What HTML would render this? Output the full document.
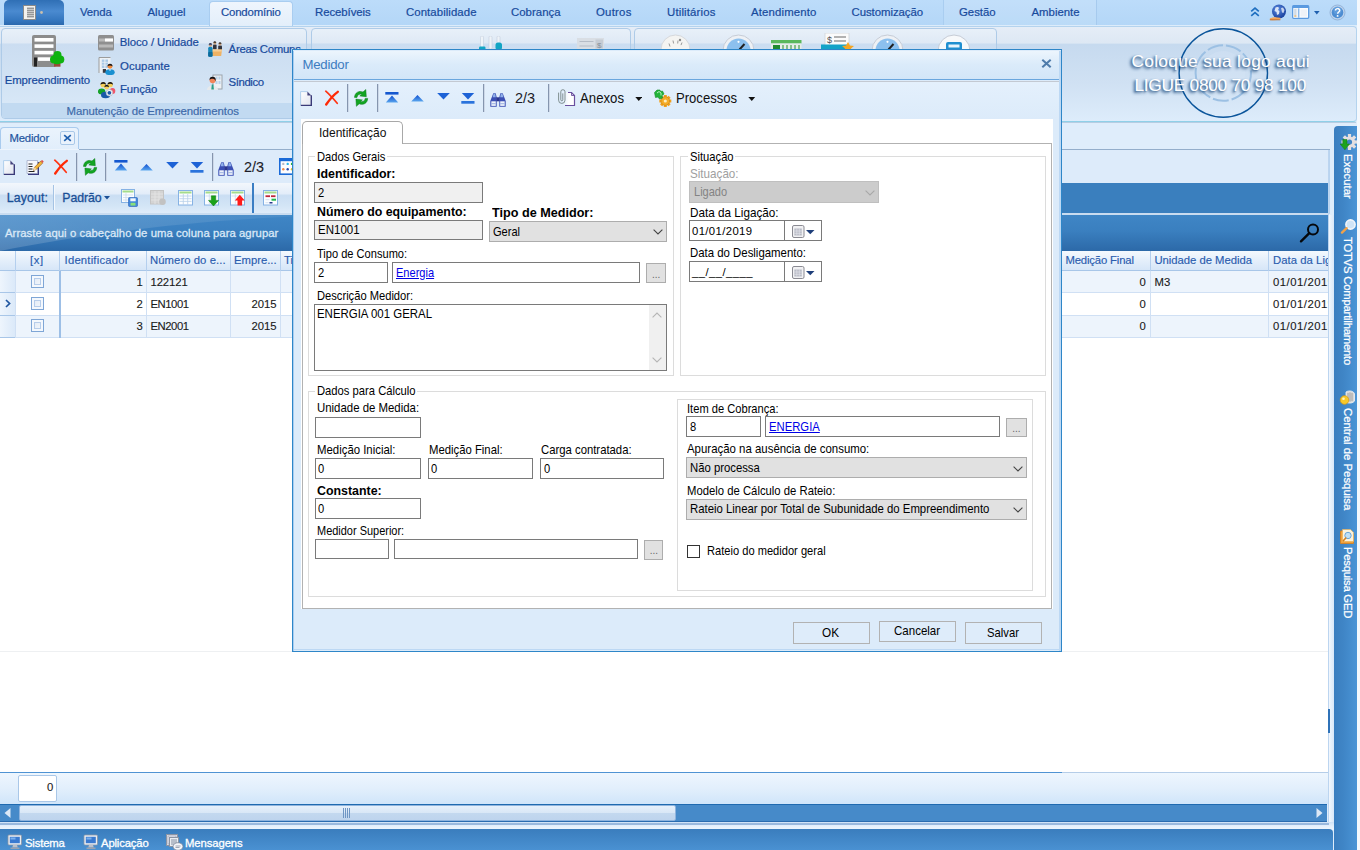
<!DOCTYPE html><html><head><meta charset="utf-8"><title>Medidor</title><style>
*{box-sizing:border-box;margin:0;padding:0}
html,body{width:1360px;height:850px;overflow:hidden;background:#fff;font-family:"Liberation Sans",sans-serif;}
#r{position:absolute;left:0;top:0;width:1360px;height:850px;overflow:hidden;background:#fff}
#r div,#r span,#r svg{position:absolute}
.t{white-space:nowrap;}
.in{background:#fff;border:1px solid #7a7a7a}
.ro{background:#f0f0f0;border:1px solid #7a7a7a}
.cb{background:#e1e1e1;border:1px solid #adadad}
.bt{background:#e1e1e1;border:1px solid #adadad}
.bt2{background:#deecfa;border:1.500px solid #b2b2b2}
.gb{border:1px solid #dcdcdc}
</style></head><body><div id="r"><div style="left:0px;top:0px;width:1360px;height:27px;background:linear-gradient(#bcdcfa,#b3d6f7)"></div>
<div style="left:0px;top:25px;width:1360px;height:2px;background:#dcecfb"></div>
<div style="left:4px;top:0px;width:60px;height:25px;border-radius:5px 5px 0 0;background:linear-gradient(#2f6fb5 0%,#4a8ad0 45%,#3577bf 80%,#2a68ae 100%)"></div>
<svg style="left:23px;top:5px" width="24" height="16" viewBox="0 0 24 16"><rect x="0.5" y="0.5" width="12" height="14" fill="#f4f2ee" stroke="#8a8a8a"/><rect x="4" y="2" width="7" height="11" fill="#c9c9c9"/><path d="M4 3.5h7M4 5.5h7M4 7.5h7M4 9.5h7M4 11.5h7" stroke="#8a8a8a" stroke-width="0.8"/><circle cx="18.5" cy="7.5" r="1.4" fill="#c8bfae"/></svg>
<div style="left:209px;top:1px;width:84px;height:27px;border-radius:4px 4px 0 0;background:linear-gradient(#eef5fd,#e2eefa);border:1px solid #a9cdf0;border-bottom:none"></div>
<div style="left:943px;top:0px;width:153px;height:25px;background:rgba(255,255,255,.1)"></div>
<div style="left:943px;top:0px;width:1px;height:25px;background:#a9cdf0"></div>
<div style="left:1096px;top:0px;width:1px;height:25px;background:#a6caee"></div>
<span class="t" style="left:80px;top:2px;font-size:11.4px;line-height:20px;color:#174a9c;letter-spacing:-0.143px;-webkit-text-stroke-width:0.2px;">Venda</span>
<span class="t" style="left:147.5px;top:2px;font-size:11.4px;line-height:20px;color:#174a9c;letter-spacing:0.014px;-webkit-text-stroke-width:0.2px;">Aluguel</span>
<span class="t" style="left:221px;top:2px;font-size:11.4px;line-height:20px;color:#174a9c;letter-spacing:-0.182px;-webkit-text-stroke-width:0.2px;">Condomínio</span>
<span class="t" style="left:315px;top:2px;font-size:11.4px;line-height:20px;color:#174a9c;letter-spacing:-0.076px;-webkit-text-stroke-width:0.2px;">Recebíveis</span>
<span class="t" style="left:406px;top:2px;font-size:11.4px;line-height:20px;color:#174a9c;letter-spacing:0.071px;-webkit-text-stroke-width:0.2px;">Contabilidade</span>
<span class="t" style="left:511px;top:2px;font-size:11.4px;line-height:20px;color:#174a9c;letter-spacing:0.026px;-webkit-text-stroke-width:0.2px;">Cobrança</span>
<span class="t" style="left:596px;top:2px;font-size:11.4px;line-height:20px;color:#174a9c;letter-spacing:0.235px;-webkit-text-stroke-width:0.2px;">Outros</span>
<span class="t" style="left:667px;top:2px;font-size:11.4px;line-height:20px;color:#174a9c;letter-spacing:0.160px;-webkit-text-stroke-width:0.2px;">Utilitários</span>
<span class="t" style="left:751px;top:2px;font-size:11.4px;line-height:20px;color:#174a9c;letter-spacing:0.148px;-webkit-text-stroke-width:0.2px;">Atendimento</span>
<span class="t" style="left:851.5px;top:2px;font-size:11.4px;line-height:20px;color:#174a9c;letter-spacing:-0.048px;-webkit-text-stroke-width:0.2px;">Customização</span>
<span class="t" style="left:959px;top:2px;font-size:11.4px;line-height:20px;color:#174a9c;letter-spacing:-0.022px;-webkit-text-stroke-width:0.2px;">Gestão</span>
<span class="t" style="left:1031.5px;top:2px;font-size:11.4px;line-height:20px;color:#174a9c;-webkit-text-stroke-width:0.2px;">Ambiente</span>
<div style="left:0px;top:27px;width:1360px;height:96px;background:#dfedfb"></div>
<div style="left:-3px;top:26px;width:1359.5px;height:96px;border-radius:4px;border:1px solid #b4d3ee;border-bottom:1.500px solid #8fd0e8;background:linear-gradient(#e5edf7 0%,#dde8f4 17%,#c6daef 18.5%,#d0e1f3 60%,#ddecfb 100%)"></div>
<div style="left:0px;top:122px;width:1356px;height:1px;background:#b7cde2"></div>
<div style="left:1px;top:27.5px;width:306px;height:91px;border-radius:4px;border:1px solid #aecbe8;background:linear-gradient(#e8f0f9 0%,#dfe9f5 15.500%,#cbddf1 17%,#d2e3f4 60%,#dbeaf9 100%);overflow:hidden"></div>
<div style="left:2px;top:102.5px;width:304px;height:15.5px;background:#c2daf1;border-radius:0 0 3px 3px"></div>
<div style="left:311px;top:27.5px;width:320px;height:91px;border-radius:4px;border:1px solid #aecbe8;background:linear-gradient(#e8f0f9 0%,#dfe9f5 15.500%,#cbddf1 17%,#d2e3f4 60%,#dbeaf9 100%);overflow:hidden"></div>
<div style="left:312px;top:102.5px;width:318px;height:15.5px;background:#c2daf1;border-radius:0 0 3px 3px"></div>
<div style="left:634px;top:27.5px;width:363px;height:91px;border-radius:4px;border:1px solid #aecbe8;background:linear-gradient(#e8f0f9 0%,#dfe9f5 15.500%,#cbddf1 17%,#d2e3f4 60%,#dbeaf9 100%);overflow:hidden"></div>
<div style="left:635px;top:102.5px;width:361px;height:15.5px;background:#c2daf1;border-radius:0 0 3px 3px"></div>
<svg style="left:32px;top:35px" width="34" height="33" viewBox="0 0 34 33"><rect x="0" y="0" width="24" height="32" rx="2" fill="#8c8c8c"/><rect x="2.5" y="3" width="19" height="3.6" fill="#fff"/><rect x="2.5" y="9.3" width="19" height="3.6" fill="#fff"/><rect x="2.5" y="15.8" width="19" height="3.6" fill="#fff"/><rect x="6" y="22.3" width="15" height="3.6" fill="#fff"/><rect x="2" y="22.5" width="3" height="9" fill="#222"/><rect x="22" y="27" width="6.5" height="4.7" fill="#9b4a3a"/><circle cx="25" cy="24" r="5.2" fill="#0fb30f"/><circle cx="22" cy="24.5" r="4" fill="#0fb30f"/><circle cx="28.3" cy="24.5" r="4" fill="#0fb30f"/><circle cx="25.5" cy="20" r="4" fill="#0fb30f"/></svg>
<span class="t" style="left:4.7px;top:70px;font-size:11.4px;line-height:20px;color:#174a9c;letter-spacing:-0.104px;-webkit-text-stroke-width:0.2px;">Empreendimento</span>
<svg style="left:98px;top:35px" width="17" height="16" viewBox="0 0 17 16"><rect x="0" y="0" width="16" height="15.5" rx="1.5" fill="#8f8f8f"/><rect x="1" y="3.5" width="14" height="3" fill="#b9b9b9"/><rect x="7" y="3.5" width="8" height="3" fill="#fff"/><rect x="1" y="9.5" width="14" height="3" fill="#b9b9b9"/></svg>
<span class="t" style="left:119.8px;top:32px;font-size:11.4px;line-height:20px;color:#174a9c;letter-spacing:-0.095px;-webkit-text-stroke-width:0.2px;">Bloco / Unidade</span>
<svg style="left:98px;top:57px" width="18" height="18" viewBox="0 0 18 18"><rect x="1" y=".5" width="11.500" height="15.500" fill="#eef2f6"/><path d="M1 16V.5h11.500" fill="none" stroke="#9c9c9c" stroke-width="1"/><rect x="3.800" y="2.500" width="2.600" height="8.500" fill="#a9c9e8"/><rect x="7.400" y="2.500" width="2.600" height="8.500" fill="#a9c9e8"/><path d="M3.800 5.300h6.200M3.800 8.100h6.200" stroke="#eef2f6" stroke-width=".7"/><rect x="4.800" y="12" width="3.200" height="3.800" fill="#3a3a42"/><ellipse cx="12" cy="15.200" rx="4.700" ry="2.900" fill="#1a90d0"/><path d="M10.800 12.400l1.200 1.600 1.200-1.600z" fill="#f2f6fa"/><circle cx="12" cy="9.300" r="2.400" fill="#f08a3c"/><path d="M9.500 9.300a2.500 2.600 0 0 1 5 0c-1.400-1.200-3.600-1.200-5 0z" fill="#16161a"/></svg>
<span class="t" style="left:120px;top:56px;font-size:11.4px;line-height:20px;color:#174a9c;letter-spacing:0.074px;-webkit-text-stroke-width:0.2px;">Ocupante</span>
<svg style="left:98px;top:80px" width="18" height="19" viewBox="0 0 18 19"><ellipse cx="3.600" cy="11.500" rx="3.700" ry="3.100" fill="#16a22a"/><ellipse cx="14.500" cy="11" rx="2.800" ry="3" fill="#f0566a"/><circle cx="5.200" cy="4.700" r="2.600" fill="#f5cf58"/><path d="M2.500 4.800a2.700 2.800 0 0 1 5.400 0c-1.500-1.300-3.900-1.300-5.400 0z" fill="#16161a"/><circle cx="12.200" cy="4.700" r="2.600" fill="#f5cf58"/><path d="M9.500 4.800a2.700 2.800 0 0 1 5.400 0c-1.500-1.300-3.900-1.300-5.400 0z" fill="#16161a"/><ellipse cx="7.600" cy="15" rx="4.600" ry="3.300" fill="#1a5aa8"/><circle cx="8.700" cy="7.200" r="2.300" fill="#f5cf58"/><path d="M6.300 7.300a2.400 2.500 0 0 1 4.800 0c-1.300-1.200-3.500-1.200-4.800 0z" fill="#16161a"/><circle cx="11.400" cy="12.800" r="3.300" fill="#f4f6f8" stroke="#a8b0bc" stroke-width=".6"/><circle cx="11.400" cy="12.800" r="1.900" fill="#1a5aa8"/></svg>
<span class="t" style="left:120px;top:79px;font-size:11.4px;line-height:20px;color:#174a9c;letter-spacing:-0.150px;-webkit-text-stroke-width:0.2px;">Função</span>
<svg style="left:206px;top:41px" width="18" height="17" viewBox="0 0 18 17"><rect x="7" y="3.500" width="3.600" height="5" rx="1" fill="#33343c"/><circle cx="8.800" cy="2" r="1.500" fill="#c9a07a"/><path d="M7.300 1.800a1.500 1.500 0 0 1 3 0z" fill="#222"/><rect x="12.200" y="4.500" width="3.800" height="5" rx="1" fill="#33343c"/><circle cx="14" cy="3" r="1.500" fill="#c9a07a"/><path d="M12.500 2.800a1.500 1.500 0 0 1 3 0z" fill="#222"/><path d="M5.500 8.500h10.500l-.8 6.500H6z" fill="#eeb265"/><path d="M5.500 8.500h10.500l-.3 2H5.700z" fill="#f6cf98"/><rect x="2.200" y="5.800" width="4.300" height="10" rx="1.500" fill="#1585b8"/><rect x="2.200" y="11" width="4.300" height="4.800" rx="1" fill="#0c6a9c"/><circle cx="4.400" cy="4" r="1.700" fill="#c9a07a"/><path d="M2.700 3.800a1.700 1.700 0 0 1 3.400 0z" fill="#2a3a6a"/></svg>
<span class="t" style="left:228.6px;top:39px;font-size:11.4px;line-height:20px;color:#174a9c;letter-spacing:-0.279px;-webkit-text-stroke-width:0.2px;">Áreas Comuns</span>
<svg style="left:207px;top:74px" width="17" height="17" viewBox="0 0 17 17"><rect x="6" y="1" width="9" height="14" fill="#eef1f4" stroke="#9aa3ad"/><path d="M8.5 2.5h2v3h-2zM11.5 2.5h2v3h-2zM8.5 7h2v3h-2zM11.5 7h2v3h-2z" fill="#b9d3ea"/><circle cx="5.600" cy="6.300" r="3" fill="#f2865a"/><path d="M2.500 6a3.100 3.200 0 0 1 6.200 0l-.3 1.500c-.2-2-1-2.800-2.400-2.800-1.600 0-3 .3-3.500 1.300z" fill="#16161a"/><path d="M0 16c0-6 11-6 11 0z" fill="#e6e9ec"/><path d="M4.8 10.5h1.6l.5 5h-2.6z" fill="#2aa08a"/></svg>
<span class="t" style="left:228.6px;top:72px;font-size:11.4px;line-height:20px;color:#174a9c;letter-spacing:-0.429px;-webkit-text-stroke-width:0.2px;">Síndico</span>
<span class="t" style="left:66.5px;top:101px;font-size:11.4px;line-height:20px;color:#3e6aaa;letter-spacing:-0.063px;-webkit-text-stroke-width:0.2px;">Manutenção de Empreendimentos</span>
<div style="left:0px;top:123px;width:1360px;height:727px;background:#dfedfb"></div>
<div style="left:1357px;top:0px;width:3px;height:850px;background:#f3f8fd"></div>
<div style="left:0px;top:127px;width:79px;height:23px;border-radius:4px 4px 0 0;border:1px solid #a9cbee;border-bottom:none;background:linear-gradient(#eaf3fc,#e1eefb)"></div>
<div style="left:78.5px;top:148.5px;width:1251.5px;height:1.5px;background:#94aecb"></div>
<div style="left:0px;top:148.5px;width:78.5px;height:1.5px;background:#edf4fc"></div>
<span class="t" style="left:9.4px;top:128px;font-size:11.3px;line-height:20px;color:#1f55a0;letter-spacing:-0.161px;-webkit-text-stroke-width:0.2px;">Medidor</span>
<div style="left:60px;top:131px;width:15px;height:14px;border:1px solid #a9c8e8;border-radius:2px;background:#e9f2fc"></div>
<svg style="left:63px;top:134px" width="9" height="8" viewBox="0 0 9 8"><path d="M1.2 1.2L7.8 6.8M7.8 1.2L1.2 6.8" stroke="#1f5fae" stroke-width="1.7"/></svg>
<div style="left:0px;top:150px;width:1329px;height:33px;background:#ddebfa"></div>
<div style="left:1329px;top:150px;width:1px;height:64px;background:#b9d4f0"></div>
<div style="left:0px;top:183px;width:1329px;height:31px;background:#3a7fbe"></div>
<div style="left:0px;top:183px;width:700px;height:30px;background:linear-gradient(#f3f7fc 0%,#e3edf9 35%,#cadef3 42%,#d3e5f6 75%,#dfecfa 100%)"></div>
<div style="left:0px;top:212.5px;width:1329px;height:2.5px;background:#c9dcf0"></div>
<svg style="left:3px;top:160px" width="13" height="16" viewBox="0 0 13 16"><defs><linearGradient id="pg" x1="0" y1="0" x2="1" y2="1"><stop offset="0" stop-color="#ffffff"/><stop offset="1" stop-color="#dfe3ee"/></linearGradient></defs><path d="M.6 .6H7.400L11.300 4.500V14.400H.6z" fill="url(#pg)"/><path d="M.6 14.400V.6H7.400" fill="none" stroke="#a9cbea" stroke-width=".9"/><path d="M7.400 .6L11.300 4.500H7.400z" fill="#45457f"/><path d="M11.300 4.300V14.400H.8" fill="none" stroke="#3a3a78" stroke-width="1.400"/></svg>
<svg style="left:26px;top:159px" width="18" height="17" viewBox="0 0 18 17"><path d="M2 3h11v13H2z" fill="#3b3b80"/><path d="M1 1.5h10.5v13H1z" fill="#f7f8fc" stroke="#9aa4c0" stroke-width=".7"/><path d="M2.5 5h4M2.5 7.5h4M2.5 10h4M2.5 12.5h6" stroke="#222" stroke-width="1.1"/><path d="M7.5 11.5l1-3.2 6.2-6.2 2 2-6.2 6.2z" fill="#f2b43a" stroke="#8a5a1a" stroke-width=".6"/><path d="M14.7 2.1l1.4-1.2 1.6 1.6-1 1.6z" fill="#e0524a"/><path d="M7.5 11.5l1-3.2 2 2z" fill="#f6dcae"/></svg>
<svg style="left:52.7px;top:158.8px" width="15" height="16" viewBox="0 0 15 16"><path d="M1.800 1.200C5.500 4.500 9.500 9 13.200 13.300" stroke="#ff3312" stroke-width="1.700" fill="none" stroke-linecap="round"/><path d="M13.800 1.800C9.500 5 5.500 9.500 2.200 14.500" stroke="#ff2a06" stroke-width="2.300" fill="none" stroke-linecap="round"/></svg>
<div style="left:76px;top:153px;width:1px;height:27.5px;background:#8595ae"></div>
<div style="left:77px;top:153px;width:1px;height:27.5px;background:#cdd8e8"></div>
<svg style="left:82.7px;top:158px" width="15" height="18" viewBox="0 0 15 18"><g fill="#12a522" stroke="#0a7a16" stroke-width=".5"><path id="ra" d="M.5 8.400C.7 3.600 5 1.300 9 3L11.800 .5 12.300 7.700 5.800 6.900 7.700 5.200C5.700 4.600 3.300 5.900 3 8.400z"/><path d="M.5 8.400C.7 3.600 5 1.300 9 3L11.800 .5 12.300 7.700 5.800 6.900 7.700 5.200C5.700 4.600 3.300 5.900 3 8.400z" transform="rotate(180 7.100 8.900)"/></g></svg>
<div style="left:105px;top:153px;width:1px;height:27.5px;background:#8595ae"></div>
<div style="left:106px;top:153px;width:1px;height:27.5px;background:#cdd8e8"></div>
<svg style="left:113.5px;top:160.3px" width="14" height="11" viewBox="0 0 14 11"><defs><linearGradient id="bg1" x1="0" y1="0" x2="0" y2="1"><stop offset="0" stop-color="#0f4fd0"/><stop offset="1" stop-color="#5aa6ee"/></linearGradient></defs><rect x="0.3" y="0" width="13.2" height="2.6" fill="#1457cf"/><path d="M7 3.6l6.2 7H.8z" fill="url(#bg1)"/></svg>
<svg style="left:139.8px;top:163.5px" width="13" height="7" viewBox="0 0 13 7"><defs><linearGradient id="bg2" x1="0" y1="0" x2="0" y2="1"><stop offset="0" stop-color="#0f4fd0"/><stop offset="1" stop-color="#5aa6ee"/></linearGradient></defs><path d="M6.5 0l6.3 6.4H.2z" fill="url(#bg2)"/></svg>
<svg style="left:165.8px;top:162px" width="13" height="7" viewBox="0 0 13 7"><path d="M.2 0h12.6L6.5 6.6z" fill="#1d62d6"/></svg>
<svg style="left:190.1px;top:161.5px" width="14" height="11" viewBox="0 0 14 11"><path d="M.8 0h12.4L7 6.6z" fill="#1d62d6"/><rect x="0.3" y="8" width="13.2" height="2.7" fill="#2a73dc"/></svg>
<div style="left:212px;top:153px;width:1px;height:27.5px;background:#8595ae"></div>
<div style="left:213px;top:153px;width:1px;height:27.5px;background:#cdd8e8"></div>
<svg style="left:218.4px;top:161.5px" width="16" height="14" viewBox="0 0 16 14"><path d="M3.300 .2h2.400l1 4v9.500H.3V8z" fill="#3b4fb4"/><path d="M12.700 .2h-2.400l-1 4v9.500h6.400V8z" fill="#3b4fb4"/><rect x="6.300" y="4.300" width="3.400" height="4" fill="#2a3690"/><path d="M3.600 .8h1.600l.6 3.400H2.600z M10.800 .8h1.600l1 3.400h-3.200z" fill="#8fb0ea"/><rect x="1.300" y="8.300" width="4.500" height="4.600" fill="#eef2fa"/><rect x="10.200" y="8.300" width="4.500" height="4.600" fill="#eef2fa"/><rect x="1.300" y="10.200" width="4.500" height="1" fill="#9ab0e0"/><rect x="10.200" y="10.200" width="4.500" height="1" fill="#9ab0e0"/></svg>
<span class="t" style="left:243.8px;top:157px;font-size:14px;line-height:20px;color:#1c1c28;transform-origin:0 50%;transform:scaleX(1.0273);-webkit-text-stroke-width:0.1px;">2/3</span>
<svg style="left:278.5px;top:158px" width="17" height="17.500" viewBox="0 0 17 17.500"><rect x=".8" y=".8" width="15.4" height="15.4" fill="#fdfdff" stroke="#1a6ad8" stroke-width="1.6"/><rect x=".8" y=".8" width="15.4" height="2.4" fill="#1a6ad8"/><circle cx="4.3" cy="5.900" r="1.200" fill="#b9b9c8"/><circle cx="8.7" cy="5.900" r="1.200" fill="#2ab4e8"/><circle cx="13" cy="5.900" r="1.200" fill="#2ab43a"/><circle cx="4.3" cy="11.200" r="1.200" fill="#f08a4a"/><circle cx="8.7" cy="11.200" r="1.200" fill="#2a4ab0"/><circle cx="13" cy="11.200" r="1.200" fill="#e8c02a"/></svg>
<span class="t" style="left:6.8px;top:188px;font-size:12.3px;line-height:20px;color:#1a4f96;letter-spacing:0.122px;-webkit-text-stroke-width:0.3px;">Layout:</span>
<div style="left:53px;top:185px;width:1px;height:25px;background:#a5c3e4"></div>
<div style="left:54px;top:185px;width:1px;height:25px;background:#f3f8fd"></div>
<span class="t" style="left:62.3px;top:188px;font-size:12.3px;line-height:20px;color:#1a4f96;letter-spacing:-0.076px;-webkit-text-stroke-width:0.3px;">Padrão</span>
<svg style="left:104px;top:195.5px" width="6" height="4" viewBox="0 0 6 4"><path d="M0 0h6L3 3.6z" fill="#1a4f96"/></svg>
<svg style="left:121px;top:189px" width="17" height="18" viewBox="0 0 17 18"><rect x=".5" y=".5" width="13" height="13" fill="#fbfdff" stroke="#86b2e4"/><rect x="1.5" y="1.5" width="11" height="2" fill="#a4dc8c"/><path d="M2 6h10M2 8.5h10M2 11h10M5 4v9" stroke="#c5d6ea" stroke-width=".7"/><rect x="7.5" y="8.5" width="9" height="9" rx="1" fill="#3f86dc" stroke="#2a62b8" stroke-width=".6"/><rect x="9.3" y="9.3" width="5.4" height="3" fill="#f2f7ff"/><rect x="9.5" y="13.8" width="5" height="2.8" fill="#8ae07a"/></svg>
<svg style="left:150px;top:190px" width="17" height="16" viewBox="0 0 17 16"><rect x=".5" y=".5" width="13" height="13.5" fill="#d4d4d4" stroke="#c4c4c4"/><path d="M1 4h12M1 7h12M1 10h12M5 1v13M9 1v13" stroke="#e6e6e6" stroke-width=".8"/><circle cx="12.5" cy="11.8" r="3.3" fill="#c2c2c2"/></svg>
<svg style="left:177.5px;top:190px" width="16" height="16" viewBox="0 0 16 16"><rect x=".5" y=".5" width="14" height="14.5" fill="#fbfdff" stroke="#86b2e4"/><rect x="1.5" y="1.5" width="12" height="2" fill="#a4dc8c"/><path d="M1.5 6h12M1.5 8.7h12M1.5 11.4h12M5.3 4v11M9.7 4v11" stroke="#b7cfea" stroke-width=".8"/></svg>
<svg style="left:204px;top:190px" width="16" height="17" viewBox="0 0 16 17"><rect x=".5" y=".5" width="14" height="14.5" fill="#fbfdff" stroke="#86b2e4"/><rect x="1.5" y="1.5" width="12" height="2" fill="#a4dc8c"/><path d="M1.5 6h12M5.3 4v11" stroke="#c5d6ea" stroke-width=".7"/><path d="M7.3 5.8h4.4v4.6h2.8L9.5 16 4.5 10.4h2.8z" fill="#1aa21a" stroke="#0a7a0a" stroke-width=".5"/></svg>
<svg style="left:230px;top:190px" width="16" height="17" viewBox="0 0 16 17"><rect x=".5" y=".5" width="14" height="14.5" fill="#fbfdff" stroke="#86b2e4"/><rect x="1.5" y="1.5" width="12" height="2" fill="#a4dc8c"/><path d="M1.5 6h12M5.3 4v11" stroke="#c5d6ea" stroke-width=".7"/><path d="M9.8 4.8l5 5.6h-2.7v5.2H7.5v-5.2H4.8z" fill="#ff1a1a"/></svg>
<div style="left:252px;top:183px;width:2.4px;height:30px;background:#3a7ec4"></div>
<svg style="left:263px;top:190px" width="16" height="16" viewBox="0 0 16 16"><rect x=".5" y=".5" width="14" height="14.5" fill="#fbfdff" stroke="#86b2e4"/><rect x="1.5" y="1.5" width="12" height="2" fill="#a4dc8c"/><rect x="2.5" y="5.3" width="4.5" height="1.8" fill="#c0283a"/><rect x="8" y="5.3" width="4.5" height="1.8" fill="#c0283a"/><rect x="8.5" y="8.7" width="4.5" height="2" fill="#1fb84a"/><rect x="6.5" y="12" width="3" height="1.5" fill="#2a3a8a"/><path d="M2.5 9.7h4M2.5 12.7h3" stroke="#c5d6ea" stroke-width=".8"/></svg>
<div style="left:0px;top:215px;width:1327.5px;height:35.5px;background:linear-gradient(#3f86c6 0%,#3a7fbf 45%,#2c69a8 100%)"></div>
<svg style="left:0;top:215px" width="330" height="36" viewBox="0 0 330 36"><defs><linearGradient id="dg" x1="0" y1="0" x2="1" y2="0"><stop offset="0" stop-color="#fff" stop-opacity=".17"/><stop offset="1" stop-color="#fff" stop-opacity=".04"/></linearGradient></defs><path d="M0 0H330C200 4 90 18 0 36z" fill="url(#dg)"/></svg>
<span class="t" style="left:5px;top:223px;font-size:11.3px;line-height:20px;color:#dbe9f7;letter-spacing:0.066px;-webkit-text-stroke-width:0.3px;">Arraste aqui o cabeçalho de uma coluna para agrupar</span>
<svg style="left:1299px;top:222px" width="22" height="21" viewBox="0 0 22 21"><circle cx="14" cy="7.5" r="5" fill="none" stroke="#05080c" stroke-width="2"/><path d="M10.3 11.2L2 19.3" stroke="#05080c" stroke-width="2.4" stroke-linecap="round"/></svg>
<div style="left:0px;top:250.5px;width:1327.5px;height:521px;background:#fff"></div>
<div style="left:0px;top:250.5px;width:1327.5px;height:20.5px;background:linear-gradient(#f4f9fe 0%,#e6f0fb 45%,#d6e6f8 100%);border-bottom:1px solid #a8c6e8"></div>
<div style="left:0px;top:271px;width:1327.5px;height:22px;background:#edf4fc;border-bottom:1px solid #d0e0f4"></div>
<div style="left:0px;top:293px;width:1327.5px;height:22.5px;background:#ffffff;border-bottom:1px solid #d0e0f4"></div>
<div style="left:0px;top:315.5px;width:1327.5px;height:22px;background:#edf4fc;border-bottom:1px solid #d0e0f4"></div>
<div style="left:0px;top:271px;width:15px;height:66.5px;background:linear-gradient(90deg,#eef5fd,#dbe9f9)"></div>
<div style="left:0px;top:292px;width:15px;height:1px;background:#a8c6e8"></div>
<div style="left:0px;top:314.5px;width:15px;height:1px;background:#a8c6e8"></div>
<div style="left:0px;top:336.5px;width:15px;height:1px;background:#a8c6e8"></div>
<div style="left:14.5px;top:250.5px;width:1px;height:20.5px;background:#b4cfee"></div>
<div style="left:14.5px;top:271px;width:1px;height:66.5px;background:#d0e0f4"></div>
<div style="left:58.5px;top:250.5px;width:1px;height:20.5px;background:#b4cfee"></div>
<div style="left:58.5px;top:271px;width:1px;height:66.5px;background:#d0e0f4"></div>
<div style="left:145.5px;top:250.5px;width:1px;height:20.5px;background:#b4cfee"></div>
<div style="left:145.5px;top:271px;width:1px;height:66.5px;background:#d0e0f4"></div>
<div style="left:229.5px;top:250.5px;width:1px;height:20.5px;background:#b4cfee"></div>
<div style="left:229.5px;top:271px;width:1px;height:66.5px;background:#d0e0f4"></div>
<div style="left:279.5px;top:250.5px;width:1px;height:20.5px;background:#b4cfee"></div>
<div style="left:279.5px;top:271px;width:1px;height:66.5px;background:#d0e0f4"></div>
<div style="left:1149.5px;top:250.5px;width:1px;height:20.5px;background:#b4cfee"></div>
<div style="left:1149.5px;top:271px;width:1px;height:66.5px;background:#d0e0f4"></div>
<div style="left:1267.5px;top:250.5px;width:1px;height:20.5px;background:#b4cfee"></div>
<div style="left:1267.5px;top:271px;width:1px;height:66.5px;background:#d0e0f4"></div>
<div style="left:58.5px;top:271px;width:2px;height:66.5px;background:#9dbfe6"></div>
<span class="t" style="left:30px;top:250px;font-size:11.3px;line-height:20px;color:#2a5cae;letter-spacing:0.554px;-webkit-text-stroke-width:0.15px;">[x]</span>
<span class="t" style="left:64.6px;top:250px;font-size:11.3px;line-height:20px;color:#2a5cae;letter-spacing:0.189px;-webkit-text-stroke-width:0.15px;">Identificador</span>
<span class="t" style="left:150px;top:250px;font-size:11.3px;line-height:20px;color:#2a5cae;letter-spacing:0.062px;-webkit-text-stroke-width:0.15px;">Número do e...</span>
<span class="t" style="left:234px;top:250px;font-size:11.3px;line-height:20px;color:#2a5cae;letter-spacing:-0.013px;-webkit-text-stroke-width:0.15px;">Empre...</span>
<span class="t" style="left:284px;top:250px;font-size:11.3px;line-height:20px;color:#2a5cae;-webkit-text-stroke-width:0.15px;">Tipo</span>
<span class="t" style="left:1065.4px;top:250px;font-size:11.3px;line-height:20px;color:#2a5cae;letter-spacing:-0.148px;-webkit-text-stroke-width:0.15px;">Medição Final</span>
<span class="t" style="left:1154.4px;top:250px;font-size:11.3px;line-height:20px;color:#2a5cae;letter-spacing:-0.028px;-webkit-text-stroke-width:0.15px;">Unidade de Medida</span>
<div style="left:1272px;top:252px;width:55.5px;height:18px;overflow:hidden;background:none"><span class="t" style="left:1px;top:-2px;font-size:11.3px;line-height:20px;color:#2a5cae;letter-spacing:.05px;-webkit-text-stroke-width:0.15px;">Data da Ligação</span></div>
<div style="left:31px;top:275.2px;width:13px;height:13px;border:1px solid #7fa6d6;background:linear-gradient(135deg,#dfe8f4,#f6f9fd);box-shadow:inset 0 0 0 2px #f4f8fd, inset 0 0 0 3px #b7cdea"></div>
<span class="t" style="left:136.5px;top:272px;font-size:11.3px;line-height:20px;color:#1a1a1a;letter-spacing:0.303px;-webkit-text-stroke-width:0.12px;">1</span>
<span class="t" style="left:150.5px;top:272px;font-size:11.3px;line-height:20px;color:#1a1a1a;letter-spacing:-0.101px;-webkit-text-stroke-width:0.12px;">122121</span>
<span class="t" style="left:1139.5px;top:272px;font-size:11.3px;line-height:20px;color:#1a1a1a;letter-spacing:0.803px;-webkit-text-stroke-width:0.12px;">0</span>
<div style="left:1272px;top:273px;width:55.5px;height:18px;overflow:hidden;background:none"><span class="t" style="left:1px;top:-1px;font-size:11.3px;line-height:20px;color:#1a1a1a;letter-spacing:.5px;-webkit-text-stroke-width:0.12px;">01/01/2019</span></div>
<div style="left:31px;top:297.2px;width:13px;height:13px;border:1px solid #7fa6d6;background:linear-gradient(135deg,#dfe8f4,#f6f9fd);box-shadow:inset 0 0 0 2px #f4f8fd, inset 0 0 0 3px #b7cdea"></div>
<span class="t" style="left:136.5px;top:294px;font-size:11.3px;line-height:20px;color:#1a1a1a;letter-spacing:0.303px;-webkit-text-stroke-width:0.12px;">2</span>
<span class="t" style="left:150.5px;top:294px;font-size:11.3px;line-height:20px;color:#1a1a1a;letter-spacing:-0.455px;-webkit-text-stroke-width:0.12px;">EN1001</span>
<span class="t" style="left:251.5px;top:294px;font-size:11.3px;line-height:20px;color:#1a1a1a;letter-spacing:-0.010px;-webkit-text-stroke-width:0.12px;">2015</span>
<span class="t" style="left:1139.5px;top:294px;font-size:11.3px;line-height:20px;color:#1a1a1a;letter-spacing:0.803px;-webkit-text-stroke-width:0.12px;">0</span>
<div style="left:1272px;top:295px;width:55.5px;height:18px;overflow:hidden;background:none"><span class="t" style="left:1px;top:-1px;font-size:11.3px;line-height:20px;color:#1a1a1a;letter-spacing:.5px;-webkit-text-stroke-width:0.12px;">01/01/2019</span></div>
<div style="left:31px;top:319.2px;width:13px;height:13px;border:1px solid #7fa6d6;background:linear-gradient(135deg,#dfe8f4,#f6f9fd);box-shadow:inset 0 0 0 2px #f4f8fd, inset 0 0 0 3px #b7cdea"></div>
<span class="t" style="left:136.5px;top:316px;font-size:11.3px;line-height:20px;color:#1a1a1a;letter-spacing:0.303px;-webkit-text-stroke-width:0.12px;">3</span>
<span class="t" style="left:150.5px;top:316px;font-size:11.3px;line-height:20px;color:#1a1a1a;letter-spacing:-0.455px;-webkit-text-stroke-width:0.12px;">EN2001</span>
<span class="t" style="left:251.5px;top:316px;font-size:11.3px;line-height:20px;color:#1a1a1a;letter-spacing:-0.010px;-webkit-text-stroke-width:0.12px;">2015</span>
<span class="t" style="left:1139.5px;top:316px;font-size:11.3px;line-height:20px;color:#1a1a1a;letter-spacing:0.803px;-webkit-text-stroke-width:0.12px;">0</span>
<div style="left:1272px;top:317px;width:55.5px;height:18px;overflow:hidden;background:none"><span class="t" style="left:1px;top:-1px;font-size:11.3px;line-height:20px;color:#1a1a1a;letter-spacing:.5px;-webkit-text-stroke-width:0.12px;">01/01/2019</span></div>
<span class="t" style="left:1154.4px;top:272px;font-size:11.3px;line-height:20px;color:#1a1a1a;letter-spacing:0.248px;-webkit-text-stroke-width:0.12px;">M3</span>
<svg style="left:5px;top:299px" width="6" height="9" viewBox="0 0 6 9"><path d="M1 1l3.6 3.5L1 8" stroke="#1f55a0" stroke-width="1.7" fill="none"/></svg>
<div style="left:0px;top:651px;width:1327.5px;height:1px;background:#eef0f2"></div>
<div style="left:0px;top:772px;width:1327.5px;height:32px;background:linear-gradient(#eef6fe 0%,#e2effc 50%,#d0e5fa 100%);border-top:1px solid #b5cde8"></div>
<div style="left:0px;top:771.7px;width:1061.5px;height:1.2px;background:#4f93d3"></div>
<div style="left:17.5px;top:775px;width:39.5px;height:26.5px;background:#fff;border:1px solid #a9c7e8;border-radius:2px"></div>
<span class="t" style="left:47px;top:777px;font-size:11.3px;line-height:20px;color:#1a1a1a;letter-spacing:0.303px;-webkit-text-stroke-width:0.12px;">0</span>
<div style="left:0px;top:803.5px;width:1327px;height:18.3px;background:#468ac9;border-top:1.200px solid #1f6ab0;border-bottom:1px solid #2a6cb0"></div>
<div style="left:18.5px;top:805px;width:657px;height:16px;background:linear-gradient(#e6f0fb 0%,#d9e7f6 48%,#c3d8ef 52%,#bed4ed 100%);border:1px solid #8fb4de;border-radius:2px"></div>
<svg style="left:343px;top:808px" width="8" height="10" viewBox="0 0 8 10"><path d="M.5 0v10M2.5 0v10M4.5 0v10M6.5 0v10" stroke="#6f96c4" stroke-width="1"/></svg>
<svg style="left:4px;top:808px" width="7" height="10" viewBox="0 0 7 10"><path d="M6.5 0v10L.5 5z" fill="#dce8f6"/></svg>
<svg style="left:1315.5px;top:808px" width="7" height="10" viewBox="0 0 7 10"><path d="M.5 0v10l6-5z" fill="#dce8f6"/></svg>
<div style="left:0px;top:822px;width:1334px;height:8px;background:linear-gradient(#cfe2f6,#e4f0fc 50%,#eef5fd)"></div>
<div style="left:0px;top:823.3px;width:1329px;height:1.5px;background:#9ab9de"></div>
<div style="left:1327.5px;top:150px;width:1.5px;height:672px;background:#bcd5f0"></div>
<div style="left:1329px;top:215px;width:5px;height:607px;background:linear-gradient(90deg,#f2f7fd,#d9e8f9)"></div>
<div style="left:1328px;top:709px;width:2px;height:24px;background:#2f72b8"></div>
<div style="left:0px;top:829.3px;width:1333px;height:21px;border-radius:0 4px 0 0;background:linear-gradient(#3a7dbd,#4a91d2)"></div>
<svg style="left:7px;top:834px" width="16" height="16" viewBox="0 0 16 16"><rect x="1" y="1" width="13.5" height="10" rx="1" fill="#e9edf2" stroke="#8a94a4" stroke-width=".8"/><rect x="2.8" y="2.8" width="10" height="6.4" fill="#3a7ad0"/><rect x="3.5" y="3.5" width="5" height="2" fill="#7ab0ee"/><path d="M6 11h4l.8 2.5H5.2z" fill="#b9c0cc"/><rect x="3.5" y="13.5" width="9" height="1.6" fill="#9aa2b0"/></svg>
<span class="t" style="left:25px;top:833px;font-size:11.3px;line-height:20px;color:#fff;letter-spacing:-0.173px;-webkit-text-stroke-width:0.3px;">Sistema</span>
<svg style="left:82.5px;top:834px" width="16" height="16" viewBox="0 0 16 16"><rect x="1" y="1" width="13.5" height="10" rx="1" fill="#e9edf2" stroke="#8a94a4" stroke-width=".8"/><rect x="2.8" y="2.8" width="10" height="6.4" fill="#3a7ad0"/><rect x="3.5" y="3.5" width="5" height="2" fill="#7ab0ee"/><path d="M6 11h4l.8 2.5H5.2z" fill="#b9c0cc"/><rect x="3.5" y="13.5" width="9" height="1.6" fill="#9aa2b0"/></svg>
<span class="t" style="left:101px;top:833px;font-size:11.3px;line-height:20px;color:#fff;letter-spacing:-0.154px;-webkit-text-stroke-width:0.3px;">Aplicação</span>
<svg style="left:166px;top:834px" width="18" height="17" viewBox="0 0 18 17"><rect x=".5" y=".5" width="11" height="11" fill="#e9edf2" stroke="#8a94a4"/><rect x="2" y="2" width="8" height="8" fill="#f9fbfd" stroke="#aab"/><rect x="3.5" y="3.5" width="9" height="9" fill="#e9edf2" stroke="#8a94a4"/><path d="M5 6h6M5 8h6M5 10h4" stroke="#6a7a90" stroke-width=".8"/><ellipse cx="12" cy="12.5" rx="5" ry="3.8" fill="#f4f6fa" stroke="#7a8496" stroke-width=".8"/><path d="M9.5 12h5M9.5 13.5h4" stroke="#7a8496" stroke-width=".7"/></svg>
<span class="t" style="left:185px;top:833px;font-size:11.3px;line-height:20px;color:#fff;letter-spacing:-0.090px;-webkit-text-stroke-width:0.3px;">Mensagens</span>
<div style="left:1334px;top:125.5px;width:23.2px;height:725px;border-radius:4px 0 0 0;background:linear-gradient(90deg,#3b7ebf 0%,#3f85c6 40%,#4a94d6 100%)"></div>
<svg style="left:1170px;top:27px" width="110" height="96" viewBox="0 0 110 96"><circle cx="53.3" cy="46" r="44.200" fill="none" stroke="#0b559b" stroke-width="1.400"/><circle cx="53.3" cy="46" r="27.700" fill="none" stroke="#9cc0e3" stroke-width="2" stroke-dasharray="16 3"/><circle cx="53.3" cy="46" r="22" fill="#d7e6f5" opacity=".35"/></svg>
<span class="t" style="left:1131.5px;top:51px;font-size:17.3px;line-height:20px;color:#fff;letter-spacing:0.310px;text-shadow:-2px 2px 3px rgba(30,75,125,.85),-1px 1px 1.500px rgba(30,75,125,.55);">Coloque sua logo aqui</span>
<span class="t" style="left:1134.4px;top:75px;font-size:17.3px;line-height:20px;color:#fff;letter-spacing:-0.255px;text-shadow:-2px 2px 3px rgba(30,75,125,.85),-1px 1px 1.500px rgba(30,75,125,.55);">LIGUE 0800 70 98 100</span>
<span class="t" style="writing-mode:vertical-rl;left:1341.87px;top:153.7px;font-size:11.3px;line-height:11.3px;color:#fff;letter-spacing:0.038px;-webkit-text-stroke-width:0.25px;">Executar</span>
<span class="t" style="writing-mode:vertical-rl;left:1341.87px;top:237px;font-size:11.3px;line-height:11.3px;color:#fff;letter-spacing:-0.218px;-webkit-text-stroke-width:0.25px;">TOTVS Compartilhamento</span>
<span class="t" style="writing-mode:vertical-rl;left:1341.87px;top:408.4px;font-size:11.3px;line-height:11.3px;color:#fff;letter-spacing:0.025px;-webkit-text-stroke-width:0.25px;">Central de Pesquisa</span>
<span class="t" style="writing-mode:vertical-rl;left:1341.87px;top:547px;font-size:11.3px;line-height:11.3px;color:#fff;letter-spacing:-0.249px;-webkit-text-stroke-width:0.25px;">Pesquisa GED</span>
<svg style="left:1339px;top:134px" width="18" height="18" viewBox="0 0 18 18"><g transform="translate(10.5 8)"><g fill="#e4dfe0"><rect x="-1.6" y="-8" width="3.2" height="16"/><rect x="-1.6" y="-8" width="3.2" height="16" transform="rotate(45)"/><rect x="-1.6" y="-8" width="3.2" height="16" transform="rotate(90)"/><rect x="-1.6" y="-8" width="3.2" height="16" transform="rotate(135)"/></g><circle r="5.6" fill="#e4dfe0"/><circle r="2.6" fill="#3f85c6"/></g><path d="M3.8 5.5h4.2v4.5h2.6L5.9 15.8 1.2 10h2.6z" fill="#1da21d" stroke="#0f7a0f" stroke-width=".5"/></svg>
<svg style="left:1340px;top:219px" width="17" height="15" viewBox="0 0 17 15"><circle cx="10.5" cy="5.5" r="4.6" fill="#cfe4f7" stroke="#f2f6fa" stroke-width="1.6"/><path d="M6.6 9.2L2 13.6" stroke="#f0a24a" stroke-width="2.4" stroke-linecap="round"/></svg>
<svg style="left:1339px;top:390px" width="17" height="16" viewBox="0 0 17 16"><path d="M7 2c3-2 8-1 8.5 2v7c-1 2-6 3-8.5 1z" fill="#d9d9d9" stroke="#f4f4f4" stroke-width=".8"/><path d="M9 3v8M11 2.5v9M13 3v8" stroke="#9a9a9a" stroke-width=".9"/><circle cx="5.5" cy="10" r="4.3" fill="#f7c92a" stroke="#d89a10" stroke-width=".7"/><circle cx="4.5" cy="8.8" r="1.3" fill="#fff4c0"/></svg>
<svg style="left:1339px;top:528px" width="17" height="17" viewBox="0 0 17 17"><path d="M1.5 3h9l4 4v8.5h-13z" fill="#f4a23a" stroke="#d8801a" stroke-width=".8"/><path d="M3.5 1.5h8l3 3v9h-11z" fill="#fdf3dc" stroke="#e8b25a" stroke-width=".7"/><circle cx="9" cy="7.5" r="3.2" fill="#bfe0f7" stroke="#6aa6d8" stroke-width="1"/><path d="M6.8 10L4.3 12.8" stroke="#d8801a" stroke-width="1.6" stroke-linecap="round"/></svg>
<svg style="left:479px;top:36px" width="24" height="14" viewBox="0 0 24 14"><rect x="1.5" y="0" width="3" height="13" rx="1.2" fill="#eef3f8" stroke="#c2cfde" stroke-width=".6"/><rect x="10" y="0" width="3" height="13" rx="1.2" fill="#eef3f8" stroke="#c2cfde" stroke-width=".6"/><rect x="18" y="0" width="3" height="13" rx="1.2" fill="#eef3f8" stroke="#c2cfde" stroke-width=".6"/><rect x="0" y="10.5" width="6.5" height="3.5" rx="1.2" fill="#12a5c4"/><rect x="16.5" y="6.5" width="6.5" height="7.5" rx="2.5" fill="#12a5c4"/></svg>
<svg style="left:577px;top:38px" width="28" height="12" viewBox="0 0 28 12"><rect x="0" y="0" width="27" height="12" fill="#d9dee4"/><path d="M2.5 3.5h14M2.5 8h14" stroke="#b5bcc6" stroke-width="1.2"/><rect x="18.5" y="1.5" width="7.5" height="9" fill="#c6ccd4"/><text x="20" y="9.6" font-size="8" fill="#8a929c" font-family="Liberation Sans">$</text></svg>
<svg style="left:660px;top:34px" width="31" height="16" viewBox="0 0 31 16"><circle cx="15.5" cy="15.5" r="14.5" fill="#f4f4f2" stroke="#d5d8dc" stroke-width="1"/><path d="M9 9.5l1 3M13 6.5l.6 3M18 6.500l-.3 3M22 8.500l-1 2.600" stroke="#9a9a9a" stroke-width="1"/><circle cx="20" cy="6" r="1.2" fill="#8a8a8a"/></svg>
<svg style="left:722px;top:34px" width="33" height="16" viewBox="0 0 33 16"><circle cx="16.5" cy="16.5" r="15.5" fill="#eef1f5" stroke="#c6ccd6" stroke-width="1"/><circle cx="16.5" cy="16.500" r="12" fill="#8cc0ee"/><circle cx="16.5" cy="7.800" r="1.1" fill="#fff"/><path d="M22.500 10L17.500 15.500" stroke="#222" stroke-width="2"/></svg>
<svg style="left:871px;top:34px" width="33" height="16" viewBox="0 0 33 16"><circle cx="16.5" cy="16.5" r="15.5" fill="#eef1f5" stroke="#c6ccd6" stroke-width="1"/><circle cx="16.5" cy="16.500" r="12" fill="#8cc0ee"/><circle cx="16.5" cy="7.800" r="1.1" fill="#fff"/><path d="M22.500 10L17.500 15.500" stroke="#222" stroke-width="2"/></svg>
<svg style="left:771px;top:40px" width="31" height="10" viewBox="0 0 31 10"><rect x="0" y="0" width="30.500" height="3.500" fill="#5ab85a"/><rect x="0" y="3.500" width="30.500" height="7" fill="#e6ece6"/><rect x="2" y="5" width="7" height="5" fill="#1f8a2f"/><path d="M12 5v5M16 5v5M20 5v5M24 5v5M28 5v5" stroke="#6ab06a" stroke-width="1.500"/></svg>
<svg style="left:821px;top:33px" width="33" height="17" viewBox="0 0 33 17"><rect x="4" y="0" width="24" height="14" fill="#fbfbfb" stroke="#d0d4da" stroke-width=".8"/><text x="6" y="9.500" font-size="9" fill="#555" font-family="Liberation Sans">$</text><path d="M13 4h12M13 8h12" stroke="#9a9a9a" stroke-width="1.300"/><rect x="0" y="11.500" width="26" height="5.500" fill="#14a3c7"/><path d="M27 9l2 3.500 4 .5-3 2.500.5 1.500h-7l.5-1.500-3-2.500 4-.5z" fill="#f5a623"/></svg>
<svg style="left:937px;top:34px" width="34" height="16" viewBox="0 0 34 16"><circle cx="17" cy="17" r="16" fill="#f7f9fb" stroke="#c6ccd6" stroke-width="1"/><rect x="9" y="8" width="16" height="10" rx="2" fill="#1f8fd0"/><rect x="11.500" y="10.500" width="11" height="3" fill="#e8f4fc"/></svg>
<div style="left:292px;top:49px;width:770px;height:602.8px;background:#dcebfa;border:1.5px solid #2e86c8"></div>
<div style="left:293.5px;top:648.8px;width:767px;height:1.5px;background:#bcd8f4"></div>
<div style="left:293.5px;top:50.5px;width:767px;height:29px;background:linear-gradient(#ecf5fd 0%,#dbebfa 45%,#d2e5f8 100%)"></div>
<div style="left:293.5px;top:79px;width:765.5px;height:1.2px;background:#6aa6de"></div>
<div style="left:293.5px;top:80.5px;width:765.5px;height:1px;background:#c3c9d2"></div>
<div style="left:1059px;top:51px;width:1.5px;height:600px;background:#bcd8f4"></div>
<div style="left:293px;top:50.5px;width:1.3px;height:600.5px;background:#a9cdf0"></div>
<div style="left:293.5px;top:81.5px;width:765.5px;height:37.5px;background:linear-gradient(#e4f0fc,#dcebfa)"></div>
<span class="t" style="left:302.4px;top:55px;font-size:13.2px;line-height:20px;color:#3d7cc0;letter-spacing:-0.208px;">Medidor</span>
<svg style="left:1041px;top:59px" width="11" height="9" viewBox="0 0 11 9"><path d="M1.300 .8L9.700 8.200M9.700 .8L1.300 8.200" stroke="#4f7cab" stroke-width="2.100"/></svg>
<svg style="left:300px;top:91px" width="13" height="16" viewBox="0 0 13 16"><defs><linearGradient id="pg" x1="0" y1="0" x2="1" y2="1"><stop offset="0" stop-color="#ffffff"/><stop offset="1" stop-color="#dfe3ee"/></linearGradient></defs><path d="M.6 .6H7.400L11.300 4.500V14.400H.6z" fill="url(#pg)"/><path d="M.6 14.400V.6H7.400" fill="none" stroke="#a9cbea" stroke-width=".9"/><path d="M7.400 .6L11.300 4.500H7.400z" fill="#45457f"/><path d="M11.300 4.300V14.400H.8" fill="none" stroke="#3a3a78" stroke-width="1.400"/></svg>
<svg style="left:323.7px;top:89.6px" width="15" height="16" viewBox="0 0 15 16"><path d="M1.800 1.200C5.500 4.500 9.500 9 13.200 13.300" stroke="#ff3312" stroke-width="1.700" fill="none" stroke-linecap="round"/><path d="M13.800 1.800C9.500 5 5.500 9.500 2.200 14.500" stroke="#ff2a06" stroke-width="2.300" fill="none" stroke-linecap="round"/></svg>
<div style="left:347px;top:84px;width:1px;height:27.5px;background:#8595ae"></div>
<div style="left:348px;top:84px;width:1px;height:27.5px;background:#cdd8e8"></div>
<svg style="left:353.7px;top:88.7px" width="15" height="18" viewBox="0 0 15 18"><g fill="#12a522" stroke="#0a7a16" stroke-width=".5"><path id="ra" d="M.5 8.400C.7 3.600 5 1.300 9 3L11.800 .5 12.300 7.700 5.800 6.900 7.700 5.200C5.700 4.600 3.300 5.900 3 8.400z"/><path d="M.5 8.400C.7 3.600 5 1.300 9 3L11.800 .5 12.300 7.700 5.800 6.900 7.700 5.200C5.700 4.600 3.300 5.900 3 8.400z" transform="rotate(180 7.100 8.900)"/></g></svg>
<div style="left:377px;top:84px;width:1px;height:27.5px;background:#8595ae"></div>
<div style="left:378px;top:84px;width:1px;height:27.5px;background:#cdd8e8"></div>
<svg style="left:384.5px;top:91.5px" width="14" height="11" viewBox="0 0 14 11"><defs><linearGradient id="bg5" x1="0" y1="0" x2="0" y2="1"><stop offset="0" stop-color="#0f4fd0"/><stop offset="1" stop-color="#5aa6ee"/></linearGradient></defs><rect x="0.3" y="0" width="13.2" height="2.6" fill="#1457cf"/><path d="M7 3.6l6.2 7H.8z" fill="url(#bg5)"/></svg>
<svg style="left:410.8px;top:94.7px" width="13" height="7" viewBox="0 0 13 7"><defs><linearGradient id="bg6" x1="0" y1="0" x2="0" y2="1"><stop offset="0" stop-color="#0f4fd0"/><stop offset="1" stop-color="#5aa6ee"/></linearGradient></defs><path d="M6.5 0l6.3 6.4H.2z" fill="url(#bg6)"/></svg>
<svg style="left:436.8px;top:93.2px" width="13" height="7" viewBox="0 0 13 7"><path d="M.2 0h12.6L6.5 6.6z" fill="#1d62d6"/></svg>
<svg style="left:461.1px;top:92.7px" width="14" height="11" viewBox="0 0 14 11"><path d="M.8 0h12.4L7 6.6z" fill="#1d62d6"/><rect x="0.3" y="8" width="13.2" height="2.7" fill="#2a73dc"/></svg>
<div style="left:483px;top:84px;width:1px;height:27.5px;background:#8595ae"></div>
<div style="left:484px;top:84px;width:1px;height:27.5px;background:#cdd8e8"></div>
<svg style="left:489.8px;top:92.5px" width="16" height="14" viewBox="0 0 16 14"><path d="M3.300 .2h2.400l1 4v9.500H.3V8z" fill="#3b4fb4"/><path d="M12.700 .2h-2.400l-1 4v9.500h6.400V8z" fill="#3b4fb4"/><rect x="6.300" y="4.300" width="3.400" height="4" fill="#2a3690"/><path d="M3.600 .8h1.600l.6 3.400H2.600z M10.800 .8h1.600l1 3.400h-3.200z" fill="#8fb0ea"/><rect x="1.300" y="8.300" width="4.500" height="4.600" fill="#eef2fa"/><rect x="10.200" y="8.300" width="4.500" height="4.600" fill="#eef2fa"/><rect x="1.300" y="10.200" width="4.500" height="1" fill="#9ab0e0"/><rect x="10.200" y="10.200" width="4.500" height="1" fill="#9ab0e0"/></svg>
<span class="t" style="left:515px;top:88px;font-size:14px;line-height:20px;color:#1c1c28;transform-origin:0 50%;transform:scaleX(1.0324);">2/3</span>
<div style="left:548px;top:84px;width:1px;height:27.5px;background:#8595ae"></div>
<div style="left:549px;top:84px;width:1px;height:27.5px;background:#cdd8e8"></div>
<svg style="left:557px;top:89px" width="19" height="18" viewBox="0 0 19 18"><defs><linearGradient id="pp" x1="0" y1="0" x2="1" y2="0"><stop offset="0" stop-color="#fff" stop-opacity="0"/><stop offset=".5" stop-color="#fff"/></linearGradient></defs><path d="M6 3.500h8.500l3 3v10H6z" fill="url(#pp)"/><path d="M11 3.500h3.500l3 3v10H8" fill="none" stroke="#6a4f9e" stroke-width="1.200"/><path d="M14.500 3.500v3h3" fill="none" stroke="#6a4f9e" stroke-width=".9"/><path d="M1.600 4v7.200a3.200 3.200 0 0 0 6.400 0V2.800a2.100 2.100 0 0 0-4.200 0v8a1 1 0 0 0 2 0V4.800" fill="none" stroke="#6f807e" stroke-width=".85" stroke-linecap="round"/></svg>
<span class="t" style="left:580px;top:88px;font-size:14.2px;line-height:20px;color:#111;transform-origin:0 50%;transform:scaleX(0.9297);">Anexos</span>
<svg style="left:634.8px;top:96.500px" width="7.500" height="4.300" viewBox="0 0 8 5"><path d="M0 0h8L4 4.600z" fill="#111"/></svg>
<svg style="left:653px;top:88px" width="20" height="20" viewBox="0 0 20 20"><g transform="translate(12.300 13)"><g fill="#f2a01c"><rect x="-1.500" y="-6" width="3" height="12"/><rect x="-1.500" y="-6" width="3" height="12" transform="rotate(45)"/><rect x="-1.500" y="-6" width="3" height="12" transform="rotate(90)"/><rect x="-1.500" y="-6" width="3" height="12" transform="rotate(135)"/></g><circle r="4.300" fill="#f5ac28" stroke="#c07a10" stroke-width=".5"/><circle r="1.600" fill="#fdeec0"/></g><path d="M1.500 4.500l2.500-2.500h3l.5 1.500 2-.5 1.500 3-2 1.500.5 2.500-3 1-1.500-2-2.500.5z" fill="#22b43a" stroke="#128a24" stroke-width=".6"/><path d="M4 5l2-1.500 2 1.500v2.500" stroke="#c8f4cc" stroke-width=".9" fill="none"/></svg>
<span class="t" style="left:675.5px;top:88px;font-size:14.2px;line-height:20px;color:#111;transform-origin:0 50%;transform:scaleX(0.9225);">Processos</span>
<svg style="left:748.300px;top:96.500px" width="7.500" height="4.300" viewBox="0 0 8 5"><path d="M0 0h8L4 4.600z" fill="#111"/></svg>
<div style="left:300.5px;top:119px;width:752.5px;height:490px;background:#fff"></div>
<div style="left:302px;top:142.7px;width:749.7px;height:466.3px;border:1.500px solid #b2b2b2;border-bottom-width:1px;border-right-width:1px"></div>
<div style="left:302px;top:121px;width:101px;height:23.2px;background:#fff;border:1.500px solid #a8a8a8;border-bottom:none;border-radius:5px 5px 0 0"></div>
<span class="t" style="left:319.4px;top:123px;font-size:12.4px;line-height:20px;color:#111;transform-origin:0 50%;transform:scaleX(0.9687);">Identificação</span>
<div style="left:308px;top:156px;width:365.5px;height:220px;border:1px solid #dcdcdc"></div>
<div style="left:315px;top:154px;width:71.7px;height:5px;background:#fff"></div>
<span class="t" style="left:317px;top:147px;font-size:12.4px;line-height:20px;color:#000;transform-origin:0 50%;transform:scaleX(0.9015);">Dados Gerais</span>
<span class="t" style="left:316.5px;top:164px;font-size:12.4px;line-height:20px;color:#000;font-weight:bold;transform-origin:0 50%;transform:scaleX(1.0002);">Identificador:</span>
<div class="ro" style="left:314.4px;top:182px;width:168.2px;height:20.5px"></div>
<span class="t" style="left:318px;top:183px;font-size:12.4px;line-height:20px;color:#000;transform-origin:0 50%;transform:scaleX(0.9000);">2</span>
<span class="t" style="left:316.5px;top:202px;font-size:12.4px;line-height:20px;color:#000;font-weight:bold;transform-origin:0 50%;transform:scaleX(0.9975);">Número do equipamento:</span>
<span class="t" style="left:491.5px;top:203px;font-size:12.4px;line-height:20px;color:#000;font-weight:bold;transform-origin:0 50%;transform:scaleX(1.0191);">Tipo de Medidor:</span>
<div class="ro" style="left:314.4px;top:220px;width:168.2px;height:20.2px"></div>
<span class="t" style="left:318px;top:220px;font-size:12.4px;line-height:20px;color:#000;transform-origin:0 50%;transform:scaleX(0.9290);">EN1001</span>
<div class="cb" style="left:489.4px;top:220.6px;width:177.6px;height:21.4px"></div>
<span class="t" style="left:493px;top:222px;font-size:12.4px;line-height:20px;color:#000;transform-origin:0 50%;transform:scaleX(0.8907);">Geral</span>
<svg style="left:652.5px;top:228.8px" width="10" height="6" viewBox="0 0 10 6"><path d="M.6 .6L5 5l4.400-4.400" stroke="#444" stroke-width="1.100" fill="none"/></svg>
<span class="t" style="left:316.5px;top:244px;font-size:12.4px;line-height:20px;color:#000;transform-origin:0 50%;transform:scaleX(0.8939);">Tipo de Consumo:</span>
<div class="in" style="left:314.4px;top:262px;width:73.6px;height:20.7px"></div>
<span class="t" style="left:318px;top:263px;font-size:12.4px;line-height:20px;color:#000;transform-origin:0 50%;transform:scaleX(0.9000);">2</span>
<div class="in" style="left:392.4px;top:262px;width:247.6px;height:20.7px"></div>
<span class="t" style="left:396px;top:263px;font-size:12.4px;line-height:20px;color:#0000e6;transform-origin:0 50%;transform:scaleX(0.8919);text-decoration:underline;">Energia</span>
<div class="bt" style="left:646px;top:263px;width:20px;height:19.7px"></div>
<span class="t" style="left:652px;top:265px;font-size:10px;line-height:20px;color:#666;letter-spacing:-0.081px;">...</span>
<span class="t" style="left:316.5px;top:286px;font-size:12.4px;line-height:20px;color:#000;transform-origin:0 50%;transform:scaleX(0.9002);">Descrição Medidor:</span>
<div class="in" style="left:314px;top:303.5px;width:353px;height:67.3px"></div>
<span class="t" style="left:317.4px;top:304px;font-size:12.4px;line-height:20px;color:#000;transform-origin:0 50%;transform:scaleX(0.9225);">ENERGIA 001 GERAL</span>
<div style="left:648.5px;top:304.5px;width:17.5px;height:65.3px;background:#f0f0f0"></div>
<svg style="left:652.3px;top:312px" width="10" height="6" viewBox="0 0 10 6"><path d="M.6 5.400L5 1l4.400 4.400" stroke="#b5b5b5" stroke-width="1.100" fill="none"/></svg>
<svg style="left:652.3px;top:357px" width="10" height="6" viewBox="0 0 10 6"><path d="M.6 .6L5 5l4.400-4.400" stroke="#b5b5b5" stroke-width="1.100" fill="none"/></svg>
<div style="left:680.3px;top:156.3px;width:365.7px;height:219.7px;border:1px solid #dcdcdc"></div>
<div style="left:688px;top:154.3px;width:47px;height:5px;background:#fff"></div>
<span class="t" style="left:690px;top:147px;font-size:12.4px;line-height:20px;color:#000;transform-origin:0 50%;transform:scaleX(0.9039);">Situação</span>
<span class="t" style="left:690px;top:164px;font-size:12.4px;line-height:20px;color:#a0a0a0;transform-origin:0 50%;transform:scaleX(0.9406);">Situação:</span>
<div class="cb" style="left:689.4px;top:181.2px;width:189.6px;height:21.5px"></div>
<div style="left:689.4px;top:181.2px;width:189.6px;height:21.5px;background:#cccccc;border:1px solid #bfbfbf"></div>
<span class="t" style="left:693.5px;top:182px;font-size:12.4px;line-height:20px;color:#838383;transform-origin:0 50%;transform:scaleX(0.8893);">Ligado</span>
<svg style="left:864.5px;top:189.5px" width="10" height="6" viewBox="0 0 10 6"><path d="M.6 .6L5 5l4.400-4.400" stroke="#a8a8a8" stroke-width="1.100" fill="none"/></svg>
<span class="t" style="left:690px;top:203px;font-size:12.4px;line-height:20px;color:#000;transform-origin:0 50%;transform:scaleX(0.9457);">Data da Ligação:</span>
<div class="in" style="left:689px;top:220.3px;width:132.5px;height:21px"></div>
<div style="left:783.5px;top:220.3px;width:1px;height:21px;background:#7a7a7a"></div>
<span class="t" style="left:692px;top:221px;font-size:11.3px;line-height:20px;color:#000;letter-spacing:0.385px;">01/01/2019</span>
<svg style="left:792px;top:225px" width="23" height="13" viewBox="0 0 23 13"><rect x=".5" y=".5" width="11.500" height="12" rx="1.500" fill="#f1f1f3" stroke="#8a8a92"/><rect x="2.300" y="3.500" width="7.500" height="7" fill="#b9bcc6"/><path d="M2.300 6h7.500M2.300 8.300h7.500M4.800 3.500v7M7.300 3.500v7" stroke="#e6e6ee" stroke-width=".6"/><path d="M14 5h8.500l-4.250 4.300z" fill="#1f3f7a"/></svg>
<span class="t" style="left:690px;top:243px;font-size:12.4px;line-height:20px;color:#000;transform-origin:0 50%;transform:scaleX(0.9195);">Data do Desligamento:</span>
<div class="in" style="left:689px;top:260.9px;width:132.5px;height:21px"></div>
<div style="left:783.5px;top:260.9px;width:1px;height:21px;background:#7a7a7a"></div>
<span class="t" style="left:692px;top:262px;font-size:11.3px;line-height:20px;color:#000;letter-spacing:0.445px;">__/__/____</span>
<svg style="left:792px;top:265.6px" width="23" height="13" viewBox="0 0 23 13"><rect x=".5" y=".5" width="11.500" height="12" rx="1.500" fill="#f1f1f3" stroke="#8a8a92"/><rect x="2.300" y="3.500" width="7.500" height="7" fill="#b9bcc6"/><path d="M2.300 6h7.500M2.300 8.300h7.500M4.800 3.500v7M7.300 3.500v7" stroke="#e6e6ee" stroke-width=".6"/><path d="M14 5h8.500l-4.250 4.300z" fill="#1f3f7a"/></svg>
<div style="left:308px;top:391px;width:738px;height:206px;border:1px solid #dcdcdc"></div>
<div style="left:315px;top:389px;width:102px;height:5px;background:#fff"></div>
<span class="t" style="left:317px;top:381px;font-size:12.4px;line-height:20px;color:#000;transform-origin:0 50%;transform:scaleX(0.9060);">Dados para Cálculo</span>
<span class="t" style="left:316.5px;top:398px;font-size:12.4px;line-height:20px;color:#000;transform-origin:0 50%;transform:scaleX(0.9206);">Unidade de Medida:</span>
<div class="in" style="left:315px;top:417.4px;width:106px;height:20.8px"></div>
<span class="t" style="left:316.5px;top:440px;font-size:12.4px;line-height:20px;color:#000;transform-origin:0 50%;transform:scaleX(0.9191);">Medição Inicial:</span>
<span class="t" style="left:428.8px;top:440px;font-size:12.4px;line-height:20px;color:#000;transform-origin:0 50%;transform:scaleX(0.9134);">Medição Final:</span>
<span class="t" style="left:541px;top:440px;font-size:12.4px;line-height:20px;color:#000;transform-origin:0 50%;transform:scaleX(0.9134);">Carga contratada:</span>
<div class="in" style="left:315px;top:458px;width:106px;height:20.5px"></div>
<div class="in" style="left:427.6px;top:458px;width:105.9px;height:20.5px"></div>
<div class="in" style="left:540px;top:458px;width:124.4px;height:20.5px"></div>
<span class="t" style="left:318px;top:459px;font-size:12.4px;line-height:20px;color:#000;transform-origin:0 50%;transform:scaleX(0.9000);">0</span>
<span class="t" style="left:431px;top:459px;font-size:12.4px;line-height:20px;color:#000;transform-origin:0 50%;transform:scaleX(0.9000);">0</span>
<span class="t" style="left:543.5px;top:459px;font-size:12.4px;line-height:20px;color:#000;transform-origin:0 50%;transform:scaleX(0.9000);">0</span>
<span class="t" style="left:316.5px;top:481px;font-size:12.4px;line-height:20px;color:#000;font-weight:bold;transform-origin:0 50%;transform:scaleX(0.9997);">Constante:</span>
<div class="in" style="left:315px;top:498px;width:106px;height:21px"></div>
<span class="t" style="left:318px;top:499px;font-size:12.4px;line-height:20px;color:#000;transform-origin:0 50%;transform:scaleX(0.9000);">0</span>
<span class="t" style="left:316.5px;top:521px;font-size:12.4px;line-height:20px;color:#000;transform-origin:0 50%;transform:scaleX(0.8844);">Medidor Superior:</span>
<div class="in" style="left:315px;top:538.8px;width:74px;height:20.7px"></div>
<div class="in" style="left:393.5px;top:538.8px;width:244.5px;height:20.7px"></div>
<div class="bt" style="left:643.8px;top:540px;width:19.7px;height:19.5px"></div>
<span class="t" style="left:649.8px;top:541px;font-size:10px;line-height:20px;color:#666;letter-spacing:-0.081px;">...</span>
<div style="left:677.2px;top:399px;width:356.2px;height:192px;border:1px solid #dcdcdc"></div>
<span class="t" style="left:687px;top:399px;font-size:12.4px;line-height:20px;color:#000;transform-origin:0 50%;transform:scaleX(0.8986);">Item de Cobrança:</span>
<div class="in" style="left:685.8px;top:416.2px;width:74.8px;height:21px"></div>
<span class="t" style="left:689.5px;top:417px;font-size:12.4px;line-height:20px;color:#000;transform-origin:0 50%;transform:scaleX(0.9000);">8</span>
<div class="in" style="left:764.9px;top:416.2px;width:235.6px;height:21px"></div>
<span class="t" style="left:768.8px;top:417px;font-size:12.4px;line-height:20px;color:#0000e6;transform-origin:0 50%;transform:scaleX(0.9107);text-decoration:underline;">ENERGIA</span>
<div class="bt" style="left:1006px;top:417.9px;width:20.5px;height:19.3px"></div>
<span class="t" style="left:1012.3px;top:419px;font-size:10px;line-height:20px;color:#666;letter-spacing:-0.081px;">...</span>
<span class="t" style="left:687px;top:439px;font-size:12.4px;line-height:20px;color:#000;transform-origin:0 50%;transform:scaleX(0.9221);">Apuração na ausência de consumo:</span>
<div class="cb" style="left:685.8px;top:456.8px;width:341.7px;height:21.5px"></div>
<span class="t" style="left:689.8px;top:458px;font-size:12.4px;line-height:20px;color:#000;transform-origin:0 50%;transform:scaleX(0.9130);">Não processa</span>
<svg style="left:1013px;top:465.5px" width="10" height="6" viewBox="0 0 10 6"><path d="M.6 .6L5 5l4.400-4.400" stroke="#444" stroke-width="1.100" fill="none"/></svg>
<span class="t" style="left:687px;top:481px;font-size:12.4px;line-height:20px;color:#000;transform-origin:0 50%;transform:scaleX(0.9123);">Modelo de Cálculo de Rateio:</span>
<div class="cb" style="left:685.8px;top:498.6px;width:341.7px;height:21.6px"></div>
<span class="t" style="left:689.8px;top:499px;font-size:12.4px;line-height:20px;color:#000;transform-origin:0 50%;transform:scaleX(0.9176);">Rateio Linear por Total de Subunidade do Empreendimento</span>
<svg style="left:1013px;top:507.3px" width="10" height="6" viewBox="0 0 10 6"><path d="M.6 .6L5 5l4.400-4.400" stroke="#444" stroke-width="1.100" fill="none"/></svg>
<div style="left:686.5px;top:544.7px;width:13.3px;height:13.3px;background:#fff;border:1px solid #333"></div>
<span class="t" style="left:706.9px;top:541px;font-size:12.4px;line-height:20px;color:#000;transform-origin:0 50%;transform:scaleX(0.8968);">Rateio do medidor geral</span>
<div class="bt2" style="left:793px;top:622.2px;width:77px;height:21.5px"></div>
<span class="t" style="left:821.6px;top:623px;font-size:12.4px;line-height:20px;color:#000;transform-origin:0 50%;transform:scaleX(0.9494);">OK</span>
<div class="bt2" style="left:878.6px;top:620.5px;width:77.4px;height:21.5px"></div>
<span class="t" style="left:894px;top:621px;font-size:12.4px;line-height:20px;color:#000;transform-origin:0 50%;transform:scaleX(0.9296);">Cancelar</span>
<div class="bt2" style="left:965px;top:622.2px;width:77.3px;height:21.5px"></div>
<span class="t" style="left:987.3px;top:623px;font-size:12.4px;line-height:20px;color:#000;transform-origin:0 50%;transform:scaleX(0.9082);">Salvar</span>
<svg style="left:1250px;top:7px" width="10" height="10" viewBox="0 0 10 10"><path d="M1.200 4.400L5 1.200l3.800 3.200M1.200 8.800L5 5.600l3.800 3.200" stroke="#1f6fc0" stroke-width="1.700" fill="none"/></svg>
<svg style="left:1269px;top:3.500px" width="18" height="17" viewBox="0 0 18 17"><defs><radialGradient id="gl" cx=".4" cy=".35" r=".7"><stop offset="0" stop-color="#5a8ae0"/><stop offset="1" stop-color="#163c9a"/></radialGradient></defs><circle cx="10" cy="7.500" r="7" fill="url(#gl)"/><path d="M6.500 3.500c1.500-1 3-.5 3.500.5l-1 2 1.500 1-.5 3-2 1-.5-3-2-1z" fill="#e9eef8" opacity=".9"/><path d="M12 4l2-.5 1.500 2.500-1 3-1.500-.5z" fill="#dfe6f4" opacity=".85"/><path d="M.8 14.500c3-1.800 7-1.500 10.500-.8l.3 1.800c-3.500.8-7.500 1-10.500.5z" fill="#f3a55a"/><path d="M.8 15.800h10.500" stroke="#b5652a" stroke-width=".8"/></svg>
<svg style="left:1292px;top:5px" width="18" height="14" viewBox="0 0 18 14"><rect x=".7" y=".7" width="16" height="12.600" rx="1" fill="#fbfdff" stroke="#5a9ae0" stroke-width="1.300"/><rect x=".7" y=".7" width="16" height="2.300" fill="#5a9ae0"/><rect x="1.600" y="3.300" width="4" height="9.300" fill="#e8eef6"/><path d="M2.300 5h2M2.300 7h2M2.300 9h2" stroke="#b0bccc" stroke-width=".8"/><path d="M2.300 11h2" stroke="#e8a030" stroke-width="1"/><rect x="6.300" y="3.300" width="1" height="9.300" fill="#5a9ae0"/><rect x="8.500" y="4.500" width="6.500" height="7" fill="#eef2f8"/></svg>
<svg style="left:1314px;top:11.300px" width="6" height="4" viewBox="0 0 6 4"><path d="M0 0h5.600L2.800 3.400z" fill="#1f5fae"/></svg>
<svg style="left:1329px;top:3.500px" width="17" height="17" viewBox="0 0 17 17"><circle cx="8.500" cy="8.500" r="7.500" fill="#bdd3ec" stroke="#94b4da" stroke-width="1"/><circle cx="8.500" cy="8.500" r="5.800" fill="#4d8dd2"/><circle cx="8.500" cy="6.500" r="4" fill="#6aa5e2" opacity=".6"/><path d="M6.500 6.600c0-2.600 4.200-2.600 4.200-.2 0 1.600-2 1.600-2 3.300" stroke="#fff" stroke-width="1.500" fill="none"/><circle cx="8.600" cy="11.900" r=".95" fill="#fff"/></svg></div></body></html>
